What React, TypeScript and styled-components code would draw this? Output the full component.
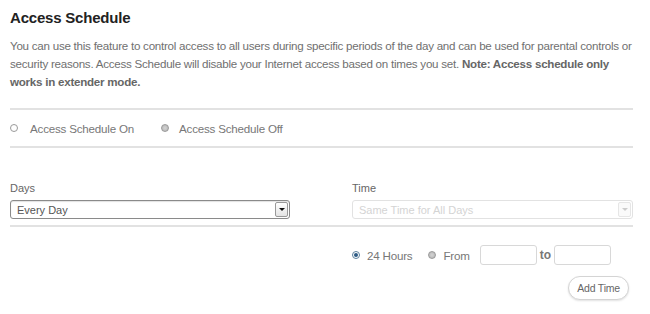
import styled, { createGlobalStyle } from 'styled-components';

const GlobalStyle = createGlobalStyle`
  * { box-sizing: border-box; }
  body {
    margin: 0;
    background: #fff;
    font-family: "Liberation Sans", Arial, sans-serif;
  }
`;

const Page = styled.div`
  width: 650px;
  height: 314px;
  padding: 9px 17px 0 10px;
  overflow: hidden;
`;

const Title = styled.h1`
  margin: 0;
  font-size: 15px;
  font-weight: bold;
  color: #222;
  line-height: 18px;
  letter-spacing: -0.2px;
`;

const Intro = styled.p`
  margin: 10px 0 0;
  font-size: 11.6px;
  line-height: 18px;
  color: #707070;
  letter-spacing: -0.25px;
  white-space: nowrap;

  b { color: #666; }
`;

const Divider = styled.hr<{ $mt: number }>`
  margin: ${p => p.$mt}px 0 0;
  border: 0;
  border-top: 2px solid #e2e2e2;
`;

const RadioRow = styled.div<{ $gap: number }>`
  display: flex;
  align-items: center;
  gap: ${p => p.$gap}px;
`;

const Choice = styled.label<{ $gap?: number }>`
  display: flex;
  align-items: center;
  gap: ${p => p.$gap ?? 9}px;
  font-size: 11.6px;
  letter-spacing: -0.2px;
  color: #777;
`;

const Dot = styled.span<{ $on?: boolean; $dim?: boolean }>`
  width: 8px;
  height: 8px;
  border-radius: 50%;
  border: 1px solid ${p => (p.$on ? '#5b7f9c' : '#9a9a9a')};
  background: ${p => (p.$dim ? 'radial-gradient(circle, #d4d4d4 0, #bdbdbd 70%, #aaa 100%)' : '#fff')};
  display: inline-flex;
  align-items: center;
  justify-content: center;

  &::after {
    content: '';
    display: ${p => (p.$on ? 'block' : 'none')};
    width: 4px;
    height: 4px;
    border-radius: 50%;
    background: #2c5a84;
  }
`;

const ScheduleRow = styled(RadioRow)`
  height: 36px;
`;

const Fields = styled.div`
  display: grid;
  grid-template-columns: 280px 281px;
  column-gap: 62px;
  margin-top: 34px;
`;

const Field = styled.div`
  display: flex;
  flex-direction: column;
  gap: 5px;
`;

const FieldLabel = styled.span`
  font-size: 11px;
  line-height: 13px;
  color: #666;
`;

const Select = styled.div<{ $disabled?: boolean }>`
  height: 19px;
  display: flex;
  align-items: center;
  justify-content: space-between;
  padding: 0 1px 0 6px;
  border: 1px solid ${p => (p.$disabled ? '#e2e2e2' : '#8a8a8a')};
  border-radius: 3px;
  box-shadow: ${p => (p.$disabled ? 'none' : 'inset 0 1px 1px rgba(0,0,0,0.12)')};
  font-size: 11px;
  color: ${p => (p.$disabled ? '#d4d4d4' : '#555')};
`;

const Arrow = styled.span<{ $disabled?: boolean }>`
  width: 13px;
  height: 15px;
  border: 1px solid ${p => (p.$disabled ? '#e6e6e6' : '#999')};
  border-radius: 2px;
  background: ${p => (p.$disabled ? '#fafafa' : 'linear-gradient(#fff, #e4e4e4)')};
  display: flex;
  align-items: center;
  justify-content: center;

  &::after {
    content: '';
    border-left: 3px solid transparent;
    border-right: 3px solid transparent;
    border-top: 3px solid ${p => (p.$disabled ? '#ccc' : '#111')};
  }
`;

const TimeArea = styled.div`
  display: flex;
  flex-direction: column;
  align-items: flex-end;
  margin-left: 342px;
  margin-top: 18px;
  width: 281px;
`;

const TimeRow = styled.div`
  align-self: stretch;
  display: flex;
  align-items: center;
`;

const Spacer = styled.span<{ $w?: number }>`
  flex: ${p => (p.$w ? `0 0 ${p.$w}px` : '1')};
`;

const TimeInput = styled.div`
  width: 57px;
  height: 20px;
  border: 1px solid #d8d8d8;
  border-radius: 3px;
  background: #fff;
`;

const To = styled.span`
  font-size: 12px;
  font-weight: bold;
  color: #777;
  width: 14px;
  text-align: right;
  margin-right: 3px;
`;

const Button = styled.button`
  margin-top: 11px;
  margin-right: 4px;
  height: 24px;
  padding: 0 8px;
  border: 1px solid #d4d4d4;
  border-radius: 12px;
  background: #fff;
  box-shadow: 0 1px 2px rgba(0,0,0,0.12);
  font-family: inherit;
  font-size: 10.5px;
  letter-spacing: -0.2px;
  color: #666;
`;

export default function App() {
  return (
    <>
      <GlobalStyle />
      <Page>
        <Title>Access Schedule</Title>
        <Intro>
          You can use this feature to control access to all users during specific periods of the day and can be used for parental controls or
          <br />
          security reasons. Access Schedule will disable your Internet access based on times you set. <b>Note: Access schedule only</b>
          <br />
          <b>works in extender mode.</b>
        </Intro>
        <Divider $mt={17} />
        <ScheduleRow $gap={27}>
          <Choice $gap={12}><Dot />Access Schedule On</Choice>
          <Choice $gap={10}><Dot $dim />Access Schedule Off</Choice>
        </ScheduleRow>
        <Divider $mt={0} />
        <Fields>
          <Field>
            <FieldLabel>Days</FieldLabel>
            <Select>Every Day<Arrow /></Select>
          </Field>
          <Field>
            <FieldLabel>Time</FieldLabel>
            <Select $disabled>Same Time for All Days<Arrow $disabled /></Select>
          </Field>
        </Fields>
        <Divider $mt={6} />
        <TimeArea>
          <TimeRow>
            <Choice $gap={7}><Dot $on />24 Hours</Choice>
            <Spacer $w={16} />
            <Choice $gap={7}><Dot $dim />From</Choice>
            <Spacer />
            <TimeInput />
            <To>to</To>
            <TimeInput />
            <Spacer $w={22} />
          </TimeRow>
          <Button>Add Time</Button>
        </TimeArea>
      </Page>
    </>
  );
}
